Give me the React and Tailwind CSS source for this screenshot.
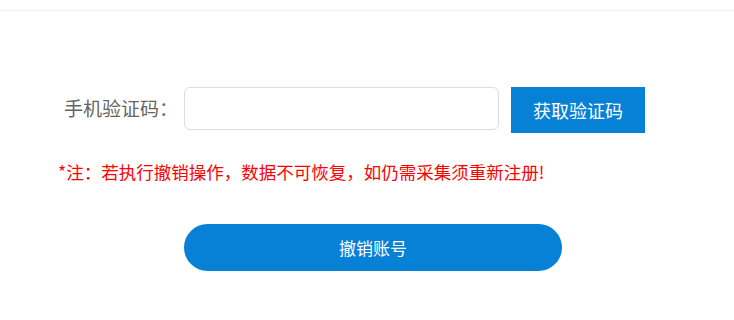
import React from "react";

const App = () => {
  return (
    <div
      className="w-[734px] h-[320px] bg-white"
      style={{ fontFamily: '"Noto Sans CJK SC", "Noto Sans", sans-serif' }}
    >
      <div className="h-[11px] border-b border-[#eeeeee]" />

      <div className="pl-[58px] pt-[76px]">
        {/* Verification code row */}
        <div className="flex items-start">
          <label className="w-[126px] h-[43px] pr-[6px] flex items-center justify-end text-[19px] text-[#666666] whitespace-nowrap">
            手机验证码：
          </label>
          <input
            type="text"
            className="w-[315px] h-[43px] border border-[#dcdcdc] rounded-[6px] px-3 outline-none"
          />
          <button className="ml-[12px] w-[134px] h-[46px] bg-[#0681d6] text-white text-[18px] flex items-center justify-center">
            获取验证码
          </button>
        </div>

        {/* Warning */}
        <p className="mt-[27px] text-[17.5px] leading-[24px] text-[#ff0000] whitespace-nowrap">
          *注：若执行撤销操作，数据不可恢复，如仍需采集须重新注册!
        </p>

        {/* Submit */}
        <div className="pl-[126px] mt-[40px]">
          <button className="w-[378px] h-[47px] rounded-full bg-[#0681d6] text-white text-[17px] flex items-center justify-center">
            撤销账号
          </button>
        </div>
      </div>
    </div>
  );
};

export default App;
